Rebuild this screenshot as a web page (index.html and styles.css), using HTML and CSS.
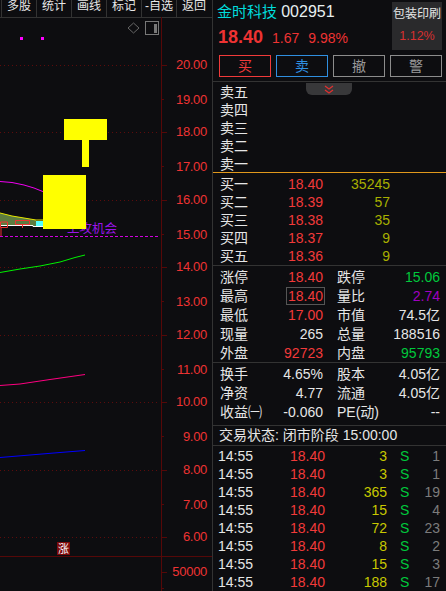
FILE: index.html
```html
<!DOCTYPE html>
<html lang="zh">
<head>
<meta charset="utf-8">
<title>金时科技 002951</title>
<link rel="stylesheet" href="styles.css">
</head>
<body>
<div class="app">
  <section class="left">
    <nav class="toolbar">
      <span class="tool">多股</span><span class="tool">统计</span><span class="tool">画线</span><span class="tool">标记</span><span class="tool">-自选</span><span class="tool">返回</span>
    </nav>
    <svg class="chart" width="212" height="574" viewBox="0 17 212 574" xmlns="http://www.w3.org/2000/svg">
      <g class="grid">
        <path d="M0 65.5H160M0 132.5H160M0 200.5H160M0 267.5H160M0 335.5H160M0 402.5H160M0 470.5H160M0 537.5H160"/>
      </g>
      <path class="axis" d="M161.5 17V591M0 556.5H212"/>
      <path class="axis" d="M161 65.5H167M161 99.5H164M161 132.5H167M161 166.5H164M161 200.5H167M161 234.5H164M161 267.5H167M161 301.5H164M161 335.5H167M161 369.5H164M161 402.5H167M161 436.5H164M161 470.5H167M161 504.5H164M161 537.5H167M161 572.5H167M161 588.5H164"/>
      <g class="scale" text-anchor="end">
        <text x="207" y="69">20.00</text><text x="207" y="104">19.00</text><text x="207" y="136">18.00</text><text x="207" y="171">17.00</text><text x="207" y="204">16.00</text><text x="207" y="239">15.00</text><text x="207" y="271">14.00</text><text x="207" y="306">13.00</text><text x="207" y="339">12.00</text><text x="207" y="374">11.00</text><text x="207" y="406">10.00</text><text x="207" y="441">9.00</text><text x="207" y="474">8.00</text><text x="207" y="509">7.00</text><text x="207" y="541">6.00</text><text x="207" y="576">50000</text>
      </g>
      <rect class="dot" x="20" y="37" width="3" height="3"/>
      <rect class="dot" x="41" y="37" width="3" height="3"/>
      <path class="diamond" d="M133.5 23L139 28L133.5 33L128 28Z"/>
      <rect class="panel-frame" x="145.5" y="21.5" width="13" height="13"/>
      <rect class="panel-bar" x="154" y="24" width="3" height="9"/>
      <polygon class="area" points="0,213 12,216 24,218 36,220 36,226 0,225"/>
      <polygon class="area-cyan" points="36,221 44,221 44,227 36,227"/>
      <path class="line-yellow" d="M0 213L12 216L24 218L36 220H44"/>
      <path class="line-white" d="M0 225.5H33V226.5H44"/>
      <path class="candle" d="M0.5 222H7.5V227.5H0.5ZM15.5 220.5H29.5V224.5H15.5ZM22.5 224.5V228M1 228V237"/>
      <path class="line-magenta" d="M0 181.5L12 182.5L24 185L34 188L44 192"/>
      <text class="signal" x="67" y="233">上攻机会</text>
      <path class="level" d="M0 236.5H160"/>
      <path class="line-green" d="M0 272.5L20 269L40 266L60 262L75 257.5L85 255"/>
      <path class="line-pink" d="M0 385.5L20 384L50 379.5L85 374.5"/>
      <path class="line-blue" d="M0 457.5L30 455L60 452.5L85 450.5"/>
      <rect class="yellow" x="64" y="119" width="43" height="21"/>
      <rect class="yellow" x="82" y="140" width="7" height="27"/>
      <rect class="yellow" x="43" y="175" width="43" height="54"/>
      <rect class="badge" x="57" y="542" width="13" height="13"/>
      <text class="badge-text" x="63.5" y="553" text-anchor="middle">涨</text>
    </svg>
  </section>

  <main class="right">
    <header class="head">
      <div class="quote">
        <div class="title"><span class="name">金时科技</span> <span class="code">002951</span></div>
        <div class="price-line"><span class="price">18.40</span><span class="delta">1.67</span><span class="delta">9.98%</span></div>
      </div>
      <div class="sector"><span class="sector-name">包装印刷</span><span class="sector-pct">1.12%</span></div>
    </header>
    <div class="actions">
      <span class="act buy">买</span><span class="act sell">卖</span><span class="act gray">撤</span><span class="act gray">警</span>
    </div>
    <div class="collapse"><svg width="10" height="9" viewBox="0 0 10 9"><path d="M1 1L5 4L9 1M1 5L5 8L9 5" fill="none" stroke="#e03030" stroke-width="1.2"/></svg></div>

    <div class="book sells">
      <div class="bk"><span>卖五</span></div>
      <div class="bk"><span>卖四</span></div>
      <div class="bk"><span>卖三</span></div>
      <div class="bk"><span>卖二</span></div>
      <div class="bk"><span>卖一</span></div>
    </div>
    <div class="book buys">
      <div class="bk"><span>买一</span><span class="r red">18.40</span><span class="r olive">35245</span></div>
      <div class="bk"><span>买二</span><span class="r red">18.39</span><span class="r olive">57</span></div>
      <div class="bk"><span>买三</span><span class="r red">18.38</span><span class="r olive">35</span></div>
      <div class="bk"><span>买四</span><span class="r red">18.37</span><span class="r olive">9</span></div>
      <div class="bk"><span>买五</span><span class="r red">18.36</span><span class="r olive">9</span></div>
    </div>
    <div class="stats first">
      <div class="st"><span>涨停</span><span class="r red">18.40</span><span>跌停</span><span class="r green">15.06</span></div>
      <div class="st"><span>最高</span><span class="r red"><b class="hl">18.40</b></span><span>量比</span><span class="r purple">2.74</span></div>
      <div class="st"><span>最低</span><span class="r red">17.00</span><span>市值</span><span class="r">74.5亿</span></div>
      <div class="st"><span>现量</span><span class="r">265</span><span>总量</span><span class="r">188516</span></div>
      <div class="st"><span>外盘</span><span class="r red">92723</span><span>内盘</span><span class="r green">95793</span></div>
    </div>
    <div class="stats second">
      <div class="st"><span>换手</span><span class="r">4.65%</span><span>股本</span><span class="r">4.05亿</span></div>
      <div class="st"><span>净资</span><span class="r">4.77</span><span>流通</span><span class="r">4.05亿</span></div>
      <div class="st"><span>收益㈠</span><span class="r">-0.060</span><span>PE(动)</span><span class="r">--</span></div>
    </div>
    <div class="status">交易状态: 闭市阶段 15:00:00</div>
    <div class="ticks">
      <div class="tk"><span>14:55</span><span class="r red">18.40</span><span class="r vol">3</span><span class="side">S</span><span class="r cnt">1</span></div>
      <div class="tk"><span>14:55</span><span class="r red">18.40</span><span class="r vol">3</span><span class="side">S</span><span class="r cnt">1</span></div>
      <div class="tk"><span>14:55</span><span class="r red">18.40</span><span class="r vol">365</span><span class="side">S</span><span class="r cnt">19</span></div>
      <div class="tk"><span>14:55</span><span class="r red">18.40</span><span class="r vol">15</span><span class="side">S</span><span class="r cnt">4</span></div>
      <div class="tk"><span>14:55</span><span class="r red">18.40</span><span class="r vol">72</span><span class="side">S</span><span class="r cnt">23</span></div>
      <div class="tk"><span>14:55</span><span class="r red">18.40</span><span class="r vol">8</span><span class="side">S</span><span class="r cnt">2</span></div>
      <div class="tk"><span>14:55</span><span class="r red">18.40</span><span class="r vol">15</span><span class="side">S</span><span class="r cnt">3</span></div>
      <div class="tk"><span>14:55</span><span class="r red">18.40</span><span class="r vol">188</span><span class="side">S</span><span class="r cnt">17</span></div>
    </div>
  </main>
</div>
</body>
</html>
```
FILE: styles.css
```css
* { box-sizing: border-box; }
html, body { margin: 0; height: 100%; background: #0d0d10; overflow: hidden; }
body { font-family: "Liberation Sans", "Noto Sans CJK SC", sans-serif; font-size: 14px; color: #e6e6e6; }
.app { display: flex; width: 446px; height: 591px; overflow: hidden; }

/* left */
.left { width: 213px; flex: none; display: flex; flex-direction: column; border-right: 1px solid #333; }
.toolbar { height: 18px; flex: none; display: flex; padding-left: 1px; border-bottom: 1px solid #333; overflow: hidden; }
.tool { width: 35px; height: 17px; line-height: 13px; font-size: 12px; text-align: center; border-left: 1px solid #333; color: #e6e6e6; white-space: nowrap; }
.chart { display: block; flex: none; margin-top: -1px; }
.grid path { stroke: #5c0c0c; stroke-width: 1; stroke-dasharray: 1 3; fill: none; }
.axis { stroke: #560808; stroke-width: 1; fill: none; }
.scale text { fill: #ee3333; font-size: 13px; letter-spacing: -0.3px; }
.dot { fill: #ff00ff; }
.diamond { fill: none; stroke: #666; }
.panel-frame { fill: none; stroke: #777; }
.panel-bar { fill: #777; }
.area { fill: #5c7c40; }
.area-cyan { fill: #55ffff; }
.line-yellow { fill: none; stroke: #e8e800; stroke-width: 1; }
.line-white { fill: none; stroke: #fff; stroke-width: 1; }
.candle { fill: none; stroke: #ee3333; stroke-width: 1; }
.line-magenta { fill: none; stroke: #f000f0; stroke-width: 1; }
.line-green { fill: none; stroke: #00f000; stroke-width: 1; }
.line-pink { fill: none; stroke: #ff0080; stroke-width: 1; }
.line-blue { fill: none; stroke: #0000ff; stroke-width: 1; }
.signal { fill: #9a14e8; font-size: 12.5px; }
.level { fill: none; stroke: #d000e0; stroke-dasharray: 3 2; }
.yellow { fill: #ffff00; }
.badge { fill: #7c0a0a; }
.badge-text { fill: #fff; font-size: 11px; }

/* right */
.right { position: relative; width: 233px; flex: none; }
.head { height: 51px; display: flex; justify-content: space-between; padding: 2px 4px 0 5px; }
.title { height: 20px; line-height: 19px; font-size: 15px; white-space: nowrap; margin-left: -1px; }
.name { color: #00dcdc; }
.code { color: #e8f0f0; font-size: 16px; }
.price-line { display: flex; align-items: baseline; margin-top: 5px; color: #ee3333; gap: 9px; font-size: 14px; }
.price { font-size: 18px; font-weight: 700; }
.sector { width: 50px; height: 48px; background: #2a2a2c; display: flex; flex-direction: column; align-items: center; padding-top: 4px; gap: 6px; font-size: 12px; white-space: nowrap; }
.sector-name { color: #e6e6e6; line-height: 16px; }
.sector-pct { color: #d83030; line-height: 16px; font-size: 12.5px; }
.actions { display: flex; gap: 5px; padding: 4px 0 0 6px; height: 31px; border-bottom: 1px solid #333; }
.act { width: 52px; height: 22px; border: 1px solid #8c8c8c; text-align: center; line-height: 20px; font-size: 14px; }
.buy { border-color: #f03a3a; color: #f03a3a; }
.sell { border-color: #2f8fe0; color: #2f8fe0; }
.gray { color: #9a9a9a; }
.collapse { position: absolute; top: 83px; left: 93px; width: 46px; height: 12px; background: #38383a; border-radius: 0 0 6px 6px; display: flex; justify-content: center; align-items: center; }
.book { padding-left: 7px; }
.sells { height: 91px; border-bottom: 1px solid #e0981c; }
.buys { height: 93px; padding-top: 1px; border-bottom: 1px solid #333; }
.bk { height: 18px; line-height: 20px; display: grid; grid-template-columns: 60px 43px 67px; }
.r { text-align: right; white-space: nowrap; }
.red { color: #f23a3a; }
.olive { color: #a8b000; }
.green { color: #00c83c; }
.purple { color: #a000c0; }
.stats { padding: 0 6px 0 7px; border-bottom: 1px solid #333; }
.first { height: 97px; padding-top: 1px; }
.second { height: 63px; padding-top: 1px; }
.st { height: 19px; line-height: 20px; display: grid; grid-template-columns: 60px 43px 14px 46px 1fr; }
.st > span:nth-child(3) { grid-column: 4; }
.st > span:nth-child(4) { grid-column: 5; }
.hl { font-weight: 400; display: inline-block; height: 18px; line-height: 16px; padding: 0 1px; border: 1px solid #555; margin-right: -2px; }
.status { height: 20px; line-height: 19px; padding-left: 6px; border-bottom: 1px solid #333; color: #e6e6e6; white-space: nowrap; }
.ticks { padding: 0 6px 0 5px; }
.tk { height: 18px; line-height: 20px; display: grid; grid-template-columns: 61px 46px 62px 21px 1fr; }
.vol { color: #c8c800; }
.side { color: #00c83c; padding-left: 13px; }
.cnt { color: #7c7c7c; }
```
